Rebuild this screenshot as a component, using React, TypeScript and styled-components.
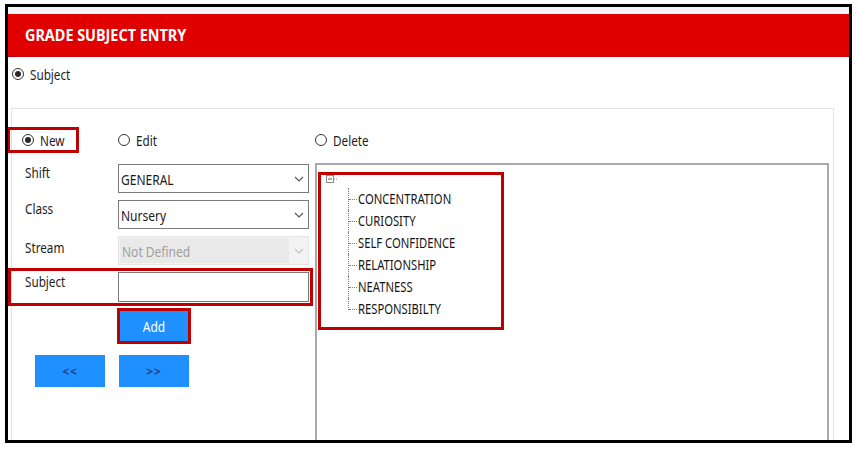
import styled, { createGlobalStyle, css } from 'styled-components';

const FONT = `"Noto Sans", "Open Sans", sans-serif`;

const GlobalStyle = createGlobalStyle`
  body {
    margin: 0;
    background: #ffffff;
    font-family: ${FONT};
  }
`;

// the source font is a narrow one, so text is squeezed to its width
const StyledText = styled.span<{ $scale?: number; $origin?: string }>`
  display: inline-block;
  vertical-align: top;
  white-space: nowrap;
  transform: scaleX(${({ $scale = 0.78 }) => $scale});
  transform-origin: ${({ $origin = 'left' }) => $origin} center;
`;

const StyledFrame = styled.div`
  margin: 4px 0 0 5px;
  width: 847px;
  height: 439px;
  box-sizing: border-box;
  border: 3px solid #000;
  background: #fff;
  overflow: hidden;
  display: flex;
  flex-direction: column;
`;

const StyledHeader = styled.div`
  height: 50px;
  flex-shrink: 0;
  box-sizing: border-box;
  border-top: 7px solid #f4f5f9;
  border-bottom: 1px solid #c4000c;
  background: #e10000;
  padding-left: 17px;
  display: flex;
  align-items: center;
  color: #fff;
  font-size: 16px;
  font-weight: 700;
`;

const StyledModeRow = styled.div`
  height: 51px;
  flex-shrink: 0;
  box-sizing: border-box;
  padding: 7px 0 0 4px;
  display: flex;
  align-items: flex-start;
`;

const StyledPanel = styled.div`
  flex: 1;
  margin: 0 15px 0 3px;
  border: 1px solid #e3e3e3;
  border-bottom: none;
  display: flex;
`;

const StyledLeft = styled.div`
  width: 303px;
  flex-shrink: 0;
`;

const StyledRadioRow = styled.div`
  display: grid;
  grid-template-columns: 106px 191px;
  margin-top: 21px;
  height: 20px;
`;

const StyledRadio = styled.label<{ $highlighted?: boolean }>`
  display: flex;
  align-items: center;
  gap: 6px;
  height: 20px;
  box-sizing: border-box;
  font-size: 15px;
  color: #1c1c1c;
  ${({ $highlighted }) =>
    $highlighted &&
    css`
      width: 66px;
      margin-left: -2px;
      padding-left: 12px;
      outline: 3px solid #c00000;
    `}
`;

const StyledCircle = styled.span<{ $checked: boolean }>`
  width: 12px;
  height: 12px;
  flex-shrink: 0;
  border-radius: 50%;
  border: 1.5px solid #333;
  box-sizing: border-box;
  display: grid;
  place-items: center;

  &::after {
    content: '';
    width: 6px;
    height: 6px;
    border-radius: 50%;
    background: ${({ $checked }) => ($checked ? '#2a2a2a' : 'transparent')};
  }
`;

const StyledForm = styled.div`
  display: flex;
  flex-direction: column;
  align-items: flex-start;
  gap: 7px;
  margin-top: 14px;
`;

const StyledField = styled.div<{ $highlighted?: boolean }>`
  display: grid;
  grid-template-columns: 106px 191px;
  ${({ $highlighted }) =>
    $highlighted &&
    css`
      outline: 3px solid #c00000;
      outline-offset: 1px;
    `}
`;

const StyledLabel = styled.span<{ $pad?: number }>`
  padding: ${({ $pad = 0 }) => $pad}px 0 0 13px;
  font-size: 15px;
  line-height: 16px;
  color: #1c1c1c;
`;

const StyledSelect = styled.div<{ $disabled?: boolean }>`
  height: 29px;
  box-sizing: border-box;
  display: flex;
  align-items: stretch;
  border: 1px solid ${({ $disabled }) => ($disabled ? '#e4e4e4' : '#7a7a7a')};
  background: ${({ $disabled }) => ($disabled ? '#f3f3f3' : '#fff')};
  font-size: 15px;
  color: ${({ $disabled }) => ($disabled ? '#a0a0a0' : '#1a1a1a')};
`;

const StyledSelectValue = styled.span<{ $disabled?: boolean }>`
  flex: 1;
  display: flex;
  align-items: center;
  padding-left: 2px;
  margin: ${({ $disabled }) => ($disabled ? '1px 0 1px 1px' : '0')};
  background: ${({ $disabled }) => ($disabled ? '#e9e9e9' : 'transparent')};
`;

const StyledChevron = styled.span`
  width: 19px;
  display: flex;
  align-items: center;
  justify-content: center;
`;

const StyledInput = styled.div`
  height: 30px;
  box-sizing: border-box;
  border: 1px solid #7a7a7a;
  background: #fff;
`;

const StyledButton = styled.button<{ $highlighted?: boolean; $dark?: boolean }>`
  border: none;
  padding: 0;
  background: #1e90ff;
  font-family: ${FONT};
  cursor: pointer;
  ${({ $dark }) =>
    $dark
      ? css`
          width: 70px;
          height: 32px;
          color: #1d3f86;
          font-size: 12px;
          font-weight: 700;
          letter-spacing: 1px;
        `
      : css`
          width: 68px;
          height: 30px;
          color: #fff;
          font-size: 15px;
        `}
  ${({ $highlighted }) =>
    $highlighted &&
    css`
      outline: 3px solid #c00000;
    `}
`;

const StyledAddRow = styled.div`
  display: flex;
  margin: 9px 0 0 108px;
`;

const StyledNavRow = styled.div`
  display: flex;
  gap: 14px;
  margin-top: 14px;
  padding-left: 23px;
`;

const StyledTreeColumn = styled.div`
  flex: 1;
  margin-right: 4px;
  display: flex;
  flex-direction: column;
`;

const StyledDeleteRow = styled.div`
  display: flex;
  margin-top: 21px;
  height: 20px;
`;

const StyledTreeBox = styled.div`
  flex: 1;
  margin-top: 13px;
  border: 2px solid #a9a9a9;
  border-bottom: none;
`;

const StyledTreeHighlight = styled.div`
  width: 186px;
  height: 158px;
  box-sizing: border-box;
  margin: 7px 0 0 1px;
  border: 3px solid #c00000;
  padding: 0 0 0 5px;
`;

const StyledTreeList = styled.ul`
  list-style: none;
  margin: 4px 0 0 22px;
  padding: 0;
`;

const StyledTreeItem = styled.li`
  position: relative;
  height: 22px;
  line-height: 21px;
  padding-left: 10px;
  font-size: 15px;
  color: #141414;

  &::before {
    content: '';
    position: absolute;
    left: 1px;
    top: 11px;
    width: 8px;
    border-top: 1px dotted #808080;
  }

  &::after {
    content: '';
    position: absolute;
    left: 0;
    top: 0;
    height: 22px;
    border-left: 1px dotted #808080;
  }

  &:last-child::after {
    height: 12px;
  }
`;

type RadioProps = {
  label: string;
  checked?: boolean;
  highlighted?: boolean;
};

const Radio = ({ label, checked = false, highlighted }: RadioProps) => (
  <StyledRadio $highlighted={highlighted}>
    <StyledCircle $checked={checked} />
    <StyledText>{label}</StyledText>
  </StyledRadio>
);

type SelectProps = {
  value: string;
  disabled?: boolean;
};

const Select = ({ value, disabled }: SelectProps) => (
  <StyledSelect $disabled={disabled}>
    <StyledSelectValue $disabled={disabled}>
      <StyledText $scale={0.8}>{value}</StyledText>
    </StyledSelectValue>
    <StyledChevron>
      <svg width="10" height="6" viewBox="0 0 10 6">
        <polyline
          points="1,1 5,5 9,1"
          fill="none"
          stroke={disabled ? '#c4c4c4' : '#555'}
          strokeWidth="1.1"
        />
      </svg>
    </StyledChevron>
  </StyledSelect>
);

const CollapseIcon = () => (
  <svg width="13" height="9" viewBox="0 0 13 9" style={{ display: 'block' }}>
    <rect x="0.5" y="0.5" width="7" height="7" fill="#fff" stroke="#8c8c8c" />
    <line x1="2" y1="4" x2="6" y2="4" stroke="#555" />
    <line x1="8" y1="4" x2="12" y2="4" stroke="#8c8c8c" strokeDasharray="1 1" />
  </svg>
);

const subjects = [
  'CONCENTRATION',
  'CURIOSITY',
  'SELF CONFIDENCE',
  'RELATIONSHIP',
  'NEATNESS',
  'RESPONSIBILTY',
];

export default function App() {
  return (
    <>
      <GlobalStyle />
      <StyledFrame>
        <StyledHeader>
          <StyledText $scale={0.9}>GRADE SUBJECT ENTRY</StyledText>
        </StyledHeader>
        <StyledModeRow>
          <Radio label="Subject" checked />
        </StyledModeRow>
        <StyledPanel>
          <StyledLeft>
            <StyledRadioRow>
              <Radio label="New" checked highlighted />
              <Radio label="Edit" />
            </StyledRadioRow>
            <StyledForm>
              <StyledField>
                <StyledLabel>
                  <StyledText>Shift</StyledText>
                </StyledLabel>
                <Select value="GENERAL" />
              </StyledField>
              <StyledField>
                <StyledLabel>
                  <StyledText>Class</StyledText>
                </StyledLabel>
                <Select value="Nursery" />
              </StyledField>
              <StyledField>
                <StyledLabel $pad={3}>
                  <StyledText>Stream</StyledText>
                </StyledLabel>
                <Select value="Not Defined" disabled />
              </StyledField>
              <StyledField $highlighted>
                <StyledLabel $pad={1}>
                  <StyledText>Subject</StyledText>
                </StyledLabel>
                <StyledInput />
              </StyledField>
            </StyledForm>
            <StyledAddRow>
              <StyledButton $highlighted>
                <StyledText $scale={0.8} $origin="center">
                  Add
                </StyledText>
              </StyledButton>
            </StyledAddRow>
            <StyledNavRow>
              <StyledButton $dark>&lt;&lt;</StyledButton>
              <StyledButton $dark>&gt;&gt;</StyledButton>
            </StyledNavRow>
          </StyledLeft>
          <StyledTreeColumn>
            <StyledDeleteRow>
              <Radio label="Delete" />
            </StyledDeleteRow>
            <StyledTreeBox>
              <StyledTreeHighlight>
                <CollapseIcon />
                <StyledTreeList>
                  {subjects.map((subject) => (
                    <StyledTreeItem key={subject}>
                      <StyledText $scale={0.75}>{subject}</StyledText>
                    </StyledTreeItem>
                  ))}
                </StyledTreeList>
              </StyledTreeHighlight>
            </StyledTreeBox>
          </StyledTreeColumn>
        </StyledPanel>
      </StyledFrame>
    </>
  );
}
